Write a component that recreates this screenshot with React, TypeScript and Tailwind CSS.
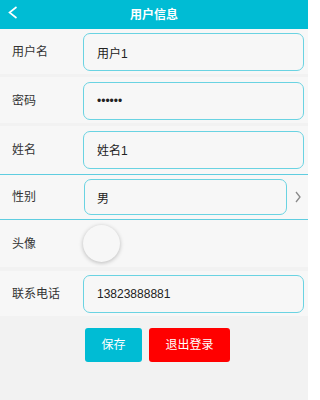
type FieldRowProps = {
  label: string;
  value: string;
  type?: string;
  rowClass: string;
  inputClass?: string;
};

function FieldRow({ label, value, type = 'text', rowClass, inputClass = 'h-[38px]' }: FieldRowProps) {
  return (
    <div className={`flex items-center bg-[#f7f7f7] pr-[4px] ${rowClass}`}>
      <span className="w-[83px] shrink-0 pl-[12px] text-[12px] text-[#333]">{label}</span>
      <input
        type={type}
        value={value}
        readOnly
        className={`w-full min-w-0 rounded-[7px] border border-[#6ad3e2] bg-[#f7f7f7] pl-[13px] text-[12px] text-[#222] outline-none ${inputClass}`}
      />
    </div>
  );
}

export default function App() {
  return (
    <div
      className="h-[400px] w-[308px] overflow-hidden bg-[#f2f2f2]"
      style={{ fontFamily: '"Liberation Sans", "Noto Sans CJK SC", sans-serif' }}
    >
      <header className="relative flex h-[29px] items-center justify-center bg-[#00bcd4]">
        <svg className="absolute left-0 top-0 h-[26px] w-[26px]" viewBox="0 0 26 26" fill="none">
          <polyline points="16.5,7 9.5,12.5 16.5,18" stroke="white" strokeWidth="1.6" strokeLinejoin="miter" />
        </svg>
        <h1 className="text-[12px] font-bold text-white">用户信息</h1>
      </header>

      <FieldRow label="用户名" value="用户1" rowClass="h-[45px] pt-[1px]" />
      <div className="h-[3px]" />
      <FieldRow label="密码" value="123456" type="password" rowClass="h-[46px] pt-[1px]" />
      <div className="h-[3px]" />
      <FieldRow label="姓名" value="姓名1" rowClass="h-[49px] border-b border-[#5fcde0] pb-[1px]" />

      <div className="flex h-[45px] items-center border-b border-[#5fcde0] bg-[#f7f7f7]">
        <span className="w-[84px] shrink-0 pl-[12px] text-[12px] text-[#333]">性别</span>
        <input
          value="男"
          readOnly
          className="h-[36px] w-[203px] min-w-0 rounded-[7px] border border-[#6ad3e2] bg-[#f7f7f7] pl-[12px] text-[12px] text-[#222] outline-none"
        />
        <svg className="ml-[6px] h-[14px] w-[10px]" viewBox="0 0 10 14" fill="none">
          <polyline points="3,2 7,7 3,12" stroke="#8a8a8a" strokeWidth="1.3" />
        </svg>
      </div>

      <div className="flex h-[47px] items-center bg-[#f7f7f7]">
        <span className="w-[83px] shrink-0 pl-[12px] text-[12px] text-[#333]">头像</span>
        <div className="h-[37px] w-[37px] rounded-full bg-[#f7f7f7] shadow-[0_1px_4px_rgba(0,0,0,0.25)]" />
      </div>
      <div className="h-[4px]" />
      <FieldRow label="联系电话" value="13823888881" rowClass="h-[45px] pt-[1px]" />

      <div className="mt-[12px] flex gap-[7px] pl-[85px]">
        <button type="button" className="h-[34px] w-[57px] rounded-[3px] bg-[#00bcd4] text-[12px] text-white">
          保存
        </button>
        <button type="button" className="h-[34px] w-[81px] rounded-[3px] bg-[#ff0000] text-[12px] text-white">
          退出登录
        </button>
      </div>
    </div>
  );
}
